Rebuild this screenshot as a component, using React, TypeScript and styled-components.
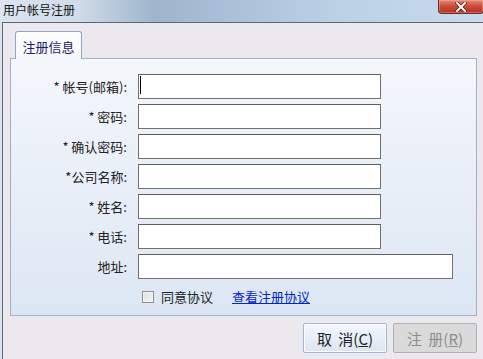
import React from 'react';
import styled, { createGlobalStyle } from 'styled-components';

const GlobalStyle = createGlobalStyle`
  html, body {
    margin: 0;
    padding: 0;
  }
  body {
    font-family: "Noto Sans CJK SC", "Noto Sans", sans-serif;
    background: #ebe9ee;
  }
`;

const Window = styled.div`
  width: 483px;
  height: 359px;
  display: flex;
  flex-direction: column;
  overflow: hidden;
  background: linear-gradient(90deg, #dae5f0 0%, #d0dce9 16%, #9fb5cc 32%, #a8bfd7 46%, #bcd1e6 70%, #c8daec 100%);
`;

const TitleBar = styled.div`
  height: 22px;
  flex-shrink: 0;
  display: flex;
  justify-content: space-between;
  align-items: flex-start;
`;

const Title = styled.span`
  font-size: 12px;
  line-height: 19px;
  padding-left: 3px;
  color: #111;
`;

const CloseButton = styled.div`
  width: 46px;
  height: 14px;
  box-sizing: border-box;
  margin-right: -1px;
  border: 1px solid #6b2a24;
  border-top: none;
  border-radius: 0 0 4px 4px;
  background: linear-gradient(#e48a78, #cc4a35 50%, #b83020);
  box-shadow: inset 0 0 0 1px rgba(255, 200, 190, 0.35);
  display: flex;
  align-items: center;
  justify-content: center;
`;

const Client = styled.div`
  flex: 1;
  margin-left: 2px;
  border-left: 1px solid #5b6878;
  border-top: 1px solid #5b6878;
  background: #ebe9ee;
  display: flex;
  flex-direction: column;
  padding: 8px 6px 0 7px;
`;

const TabStrip = styled.div`
  display: flex;
  padding-left: 5px;
  margin-bottom: -1px;
  position: relative;
  z-index: 1;
`;

const Tab = styled.div`
  width: 67px;
  height: 28px;
  box-sizing: border-box;
  border: 1px solid #94a6be;
  border-bottom: none;
  border-radius: 3px 3px 0 0;
  background: linear-gradient(#fcfdfe, #f4f7fc);
  font-size: 13px;
  color: #1f2266;
  display: flex;
  align-items: center;
  justify-content: center;
  padding-top: 2px;
`;

const Panel = styled.div`
  height: 258px;
  box-sizing: border-box;
  border: 1px solid #a0b0c6;
  background: linear-gradient(#f4f7fc, #dce6f3);
  padding-top: 15px;
  display: grid;
  grid-template-columns: 116px auto;
  grid-auto-rows: 25px;
  column-gap: 11px;
  row-gap: 5px;
  align-content: start;
`;

const Label = styled.label`
  font-size: 13px;
  line-height: 25px;
  color: #222;
  text-align: right;
  white-space: nowrap;
`;

const Field = styled.div`
  position: relative;
  display: flex;
`;

const TextInput = styled.input<{ wide?: boolean }>`
  width: ${(props) => (props.wide ? 315 : 243)}px;
  height: 25px;
  box-sizing: border-box;
  margin: 0;
  padding: 0 3px;
  border: 1px solid #717171;
  border-top-color: #5e5e5e;
  background: #fff;
  font-size: 12px;
  outline: none;
`;

const Caret = styled.span`
  position: absolute;
  left: 2px;
  top: 2px;
  width: 1px;
  height: 18px;
  background: #000;
`;

const AgreeRow = styled.div`
  grid-column: 2;
  display: flex;
  align-items: center;
  padding-left: 4px;
  font-size: 13px;
`;

const CheckBox = styled.span`
  width: 12px;
  height: 12px;
  box-sizing: border-box;
  border: 1px solid #8e8f8f;
  background: linear-gradient(135deg, #dcdcdc, #f8f8f8);
  box-shadow: inset 0 0 0 1px #f4f4f4;
`;

const AgreeText = styled.span`
  margin-left: 7px;
  color: #222;
`;

const Link = styled.a`
  margin-left: 19px;
  color: #0026cc;
  text-decoration: underline;
  cursor: pointer;
`;

const ButtonRow = styled.div`
  display: flex;
  justify-content: flex-end;
  gap: 6px;
  margin-top: 7px;
`;

const Button = styled.button<{ inactive?: boolean }>`
  width: 84px;
  height: 30px;
  box-sizing: border-box;
  margin: 0;
  padding: 0;
  font-family: "Noto Sans CJK SC", "Noto Sans", sans-serif;
  font-size: 15px;
  word-spacing: 3px;
  border-radius: 2px;
  border: 1px solid ${(props) => (props.inactive ? '#adb2b5' : '#a3b6cd')};
  background: ${(props) => (props.inactive
    ? '#dadada'
    : 'linear-gradient(#f3f7fc, #e6eef7 50%, #dbe5f1)')};
  box-shadow: ${(props) => (props.inactive ? 'none' : 'inset 0 0 0 1px #fbfdff')};
  color: ${(props) => (props.inactive ? '#8c8c8c' : '#222')};
`;

const fields = [
  { label: '* 帐号(邮箱):', caret: true },
  { label: '* 密码:' },
  { label: '* 确认密码:' },
  { label: '*公司名称:' },
  { label: '* 姓名:' },
  { label: '* 电话:' },
  { label: '地址:', wide: true },
];

const App: React.FC = () => (
  <>
    <GlobalStyle />
    <Window>
      <TitleBar>
        <Title>用户帐号注册</Title>
        <CloseButton>
          <svg width="12" height="10" viewBox="0 0 12 10">
            <path d="M2 1 L10 9 M10 1 L2 9" stroke="#5a1a14" strokeWidth="3.4" strokeLinecap="square" />
            <path d="M2 1 L10 9 M10 1 L2 9" stroke="#fff" strokeWidth="2" strokeLinecap="square" />
          </svg>
        </CloseButton>
      </TitleBar>
      <Client>
        <TabStrip>
          <Tab>注册信息</Tab>
        </TabStrip>
        <Panel>
          {fields.map((f) => (
            <React.Fragment key={f.label}>
              <Label>{f.label}</Label>
              <Field>
                <TextInput wide={f.wide} />
                {f.caret && <Caret />}
              </Field>
            </React.Fragment>
          ))}
          <AgreeRow>
            <CheckBox />
            <AgreeText>同意协议</AgreeText>
            <Link>查看注册协议</Link>
          </AgreeRow>
        </Panel>
        <ButtonRow>
          <Button>
            取 消(<u>C</u>)
          </Button>
          <Button inactive disabled>
            注 册(<u>R</u>)
          </Button>
        </ButtonRow>
      </Client>
    </Window>
  </>
);

export default App;
